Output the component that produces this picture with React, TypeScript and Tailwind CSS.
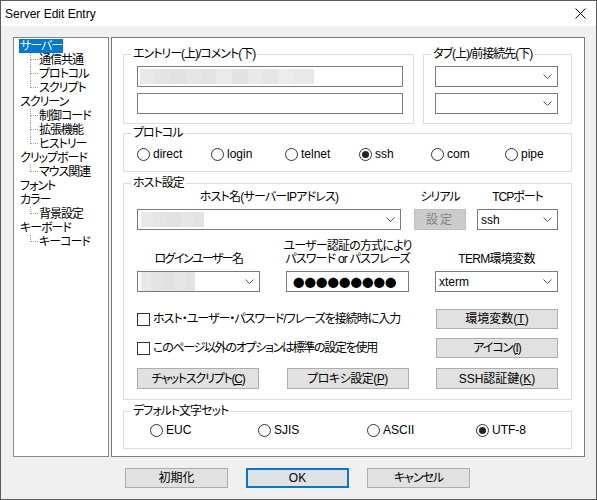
import React from 'react';

// Tree on the left side
interface TreeNode {
  label: string;
  selected?: boolean;
  children?: string[];
}

const tree: TreeNode[] = [
  { label: 'サーバー', selected: true, children: ['通信共通', 'プロトコル', 'スクリプト'] },
  { label: 'スクリーン', children: ['制御コード', '拡張機能', 'ヒストリー'] },
  { label: 'クリップボード', children: ['マウス関連'] },
  { label: 'フォント' },
  { label: 'カラー', children: ['背景設定'] },
  { label: 'キーボード', children: ['キーコード'] },
];

function Chevron() {
  return (
    <svg width="9" height="5" viewBox="0 0 9 5" className="shrink-0">
      <polyline points="0.5,0.5 4.5,4.5 8.5,0.5" fill="none" stroke="#555" strokeWidth="1" />
    </svg>
  );
}

// redacted/blurred text in the fields
function Blur({ widths, h }: { widths: number[]; h: string }) {
  const greys = ['#e8e8e8', '#e4e4e4', '#e1e1e1', '#e6e6e6', '#e3e3e3', '#ebebeb', '#e2e2e2', '#e9e9e9', '#e5e5e5', '#ececec'];
  return (
    <div className={`flex ${h}`}>
      {widths.map((w, i) => (
        <div key={i} style={{ width: w, background: greys[i % greys.length] }} />
      ))}
    </div>
  );
}

function Group({ label, className, children }: { label: string; className: string; children: React.ReactNode }) {
  return (
    <fieldset className={`border border-[#dcdcdc] ${className}`}>
      <legend className="ml-[7px] px-[2px] leading-[14px] tracking-[-1px]">{label}</legend>
      {children}
    </fieldset>
  );
}

function Combo({ className, children }: { className: string; children?: React.ReactNode }) {
  return (
    <div className={`flex h-[21px] items-center justify-between border border-[#7a7a7a] bg-white pr-[5px] ${className}`}>
      <div className="flex h-full items-center pl-[3px]">{children}</div>
      <Chevron />
    </div>
  );
}

function Radio({ label, checked, className }: { label: string; checked?: boolean; className: string }) {
  return (
    <div className={`flex items-center ${className}`}>
      <div className="flex h-[13px] w-[13px] items-center justify-center rounded-full border border-[#333] bg-white">
        {checked && <div className="h-[7px] w-[7px] rounded-full bg-[#222]" />}
      </div>
      <span className="ml-[3px] leading-[14px]">{label}</span>
    </div>
  );
}

function Btn({ children, className }: { children: React.ReactNode; className: string }) {
  return (
    <div className={`flex items-center justify-center whitespace-nowrap border border-[#adadad] bg-[#e1e1e1] ${className}`}>
      {children}
    </div>
  );
}

function CheckRow({ label, labelClass, button }: { label: string; labelClass: string; button: React.ReactNode }) {
  return (
    <div className="flex items-center justify-between">
      <div className="flex items-center">
        <div className="h-[13px] w-[13px] border border-[#333] bg-white" />
        <span className={`ml-[3px] leading-[14px] ${labelClass}`}>{label}</span>
      </div>
      {button}
    </div>
  );
}

export default function App() {
  return (
    <div className="flex h-[500px] w-[597px] flex-col overflow-hidden border border-[#5a5a5a] bg-[#f0f0f0] text-[12px] text-black font-['Liberation_Sans','Noto_Sans_CJK_JP',sans-serif] [font-feature-settings:'palt']">
      {/* Title bar */}
      <div className="flex h-[25px] shrink-0 items-center justify-between bg-white pl-[4px] pr-[10px]">
        <span className="text-[12px]">Server Edit Entry</span>
        <svg width="11" height="11" viewBox="0 0 11 11">
          <line x1="0.5" y1="0.5" x2="10.5" y2="10.5" stroke="#000" strokeWidth="1" />
          <line x1="10.5" y1="0.5" x2="0.5" y2="10.5" stroke="#000" strokeWidth="1" />
        </svg>
      </div>

      <div className="mt-[11px] flex pl-[12px]">
        {/* Tree */}
        <div className="h-[420px] w-[96px] border border-[#828790] bg-white pt-[1px] tracking-[-1px]">
          {tree.map((node) => (
            <div key={node.label}>
              <div className="flex h-[14px] items-center pl-[5px]">
                <span className={`px-[1px] leading-[14px] ${node.selected ? 'bg-[#0078d7] text-white' : ''}`}>{node.label}</span>
              </div>
              {node.children?.map((c, i) => {
                const last = i === node.children!.length - 1;
                return (
                  <div key={c} className="flex h-[14px] items-center">
                    <div className="ml-[16px] flex h-[14px] w-[8px] flex-col">
                      <div className="h-[7px] border-b border-l border-dotted border-[#a0a0a0]" />
                      <div className={`h-[7px] ${last ? '' : 'border-l border-dotted border-[#a0a0a0]'}`} />
                    </div>
                    <span className="ml-[1px] leading-[14px]">{c}</span>
                  </div>
                );
              })}
            </div>
          ))}
        </div>

        {/* Right panel */}
        <div className="ml-[2px] h-[420px] w-[474px] border border-[#7a7a7a] bg-white pl-[11px] pr-[12px]">
          <div className="mt-[9px] flex gap-[9px]">
            <Group label="エントリー(上)/コメント(下)" className="w-[291px]">
              <div className="flex flex-col gap-[6px] pb-[9px] pl-[13px] pt-[5px]">
                <div className="flex h-[21px] w-[266px] items-center border border-[#7a7a7a] bg-white pl-[2px]">
                  <Blur widths={[14, 16, 16, 16, 14, 16, 16, 14, 16, 16, 20]} h="h-[15px]" />
                </div>
                <div className="h-[21px] w-[266px] border border-[#7a7a7a] bg-white" />
              </div>
            </Group>
            <Group label="タブ(上)/前接続先(下)" className="w-[149px]">
              <div className="flex flex-col gap-[6px] pb-[9px] pl-[11px] pt-[5px]">
                <Combo className="w-[123px]" />
                <Combo className="w-[123px]" />
              </div>
            </Group>
          </div>

          <Group label="プロトコル" className="mt-[2px]">
            <div className="mt-[7px] flex pb-[10px] pl-[13px]">
              <Radio label="direct" className="w-[74px]" />
              <Radio label="login" className="w-[74px]" />
              <Radio label="telnet" className="w-[74px]" />
              <Radio label="ssh" checked className="w-[72px]" />
              <Radio label="com" className="w-[74px]" />
              <Radio label="pipe" className="w-[60px]" />
            </div>
          </Group>

          <Group label="ホスト設定" className="mt-[4px]">
            <div className="pb-[10px] pl-[13px] pr-[13px]">
              {/* host row */}
              <div className="flex items-end">
                <div className="flex w-[264px] flex-col items-center">
                  <span className="whitespace-nowrap leading-[14px] tracking-[-0.8px]">ホスト名(サーバーIPアドレス)</span>
                  <Combo className="mt-[5px] w-[264px]">
                    <Blur widths={[12, 14, 14, 12, 11]} h="h-[15px]" />
                  </Combo>
                </div>
                <div className="ml-[13px] flex w-[52px] flex-col items-center">
                  <span className="whitespace-nowrap leading-[14px] tracking-[-1px]">シリアル</span>
                  <div className="mt-[5px] flex h-[21px] w-[52px] items-center justify-center border border-[#bfbfbf] bg-[#cccccc] tracking-[2px] text-[#838383]">
                    設定
                  </div>
                </div>
                <div className="ml-[11px] flex w-[81px] flex-col items-center">
                  <span className="whitespace-nowrap leading-[14px] tracking-[-1px]">TCPポート</span>
                  <Combo className="mt-[5px] w-[81px]">
                    <span className="leading-[14px]">ssh</span>
                  </Combo>
                </div>
              </div>

              {/* user row */}
              <div className="mt-[10px] flex items-end justify-between">
                <div className="flex w-[123px] flex-col items-center">
                  <span className="whitespace-nowrap leading-[13px] tracking-[-1.6px]">ログインユーザー名</span>
                  <Combo className="mt-[5px] w-[123px]">
                    <Blur widths={[10, 12, 12, 10, 10]} h="h-[19px]" />
                  </Combo>
                </div>
                <div className="flex w-[123px] flex-col items-center">
                  <span className="whitespace-nowrap text-center leading-[13px] tracking-[-0.8px]">
                    ユーザー認証の方式により
                    <br />
                    パスワード or パスフレーズ
                  </span>
                  <div className="mt-[5px] flex h-[21px] w-[123px] items-center border border-[#7a7a7a] bg-white pl-[6px] font-['Noto_Sans_CJK_JP',sans-serif] text-[11.5px] leading-[14px] [font-feature-settings:normal]">
                    ●●●●●●●●●
                  </div>
                </div>
                <div className="flex w-[123px] flex-col items-center">
                  <span className="whitespace-nowrap leading-[13px] tracking-[-0.7px]">TERM環境変数</span>
                  <Combo className="mt-[5px] w-[123px]">
                    <span className="leading-[14px]">xterm</span>
                  </Combo>
                </div>
              </div>

              <div className="mt-[17px]">
                <CheckRow
                  label="ホスト・ユーザー・パスワード/フレーズを接続時に入力"
                  labelClass="tracking-[-1px]"
                  button={
                    <Btn className="h-[20px] w-[122px]">
                      環境変数(<span className="underline">T</span>)
                    </Btn>
                  }
                />
              </div>
              <div className="mt-[9px]">
                <CheckRow
                  label="このページ以外のオプションは標準の設定を使用"
                  labelClass="tracking-[-1.3px]"
                  button={
                    <Btn className="h-[20px] w-[122px] tracking-[-1px]">
                      アイコン(<span className="underline">I</span>)
                    </Btn>
                  }
                />
              </div>
              <div className="mt-[10px] flex justify-between">
                <Btn className="h-[21px] w-[122px] tracking-[-1.2px]">
                  チャットスクリプト(<span className="underline">C</span>)
                </Btn>
                <Btn className="h-[21px] w-[122px] tracking-[-0.5px]">
                  プロキシ設定(<span className="underline">P</span>)
                </Btn>
                <Btn className="h-[21px] w-[122px]">
                  SSH認証鍵(<span className="underline">K</span>)
                </Btn>
              </div>
            </div>
          </Group>

          <Group label="デフォルト文字セット" className="mt-[4px]">
            <div className="mt-[5px] flex pb-[11px] pl-[26px]">
              <Radio label="EUC" className="w-[108px]" />
              <Radio label="SJIS" className="w-[109px]" />
              <Radio label="ASCII" className="w-[109px]" />
              <Radio label="UTF-8" checked className="w-[80px]" />
            </div>
          </Group>
        </div>
      </div>

      {/* Bottom buttons */}
      <div className="mt-[11px] flex gap-[18px] pl-[124px]">
        <Btn className="h-[20px] w-[103px]">初期化</Btn>
        <div className="flex h-[20px] w-[103px] items-center justify-center border-2 border-[#0078d7] bg-[#e1e1e1]">OK</div>
        <Btn className="h-[20px] w-[103px] tracking-[-1px]">キャンセル</Btn>
      </div>
    </div>
  );
}
